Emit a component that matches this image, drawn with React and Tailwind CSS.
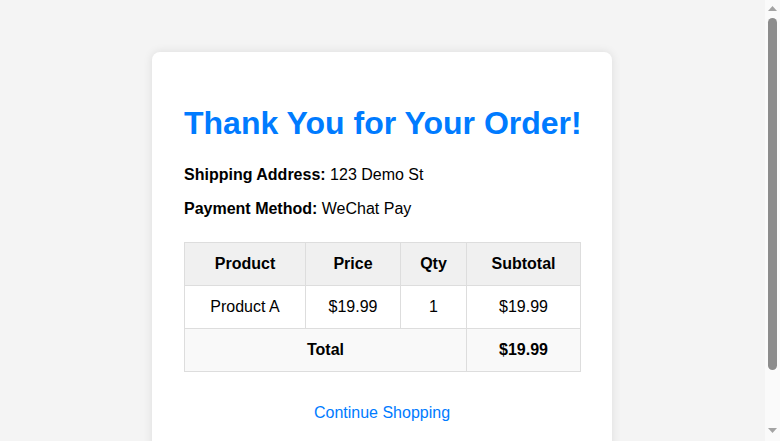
const ITEMS = [{ name: "Product A", price: "$19.99", qty: 1, subtotal: "$19.99" }];

function Scrollbar() {
  return (
    <div className="flex h-screen w-[15px] shrink-0 flex-col items-center bg-[#fafafa] pt-[6px] pb-[8px]">
      <svg width="9" height="5" viewBox="0 0 9 5">
        <path d="M4.5 0L9 5H0z" fill="#a3a3a3" />
      </svg>
      <div className="mt-[7px] h-[352px] w-[9px] rounded-full bg-[#8c8c8c]" />
      <div className="flex-1" />
      <svg width="9" height="5" viewBox="0 0 9 5">
        <path d="M0 0H9L4.5 5z" fill="#a3a3a3" />
      </svg>
    </div>
  );
}

export default function App() {
  return (
    <div className="flex h-screen bg-[#f4f4f4] font-['Liberation_Sans',Arial,sans-serif] text-[16px] leading-[normal] text-black">
      <div className="flex-1 overflow-hidden">
        <div className="pt-[52px] pr-px pb-[52px]">
          <div className="mx-auto w-[460px] rounded-lg bg-white px-8 pt-8 pb-8 shadow-[0_0_10px_rgba(0,0,0,0.1)]">
            <h1 className="mt-[21px] mb-6 whitespace-nowrap text-[32px] font-bold text-[#007bff]">
              Thank You for Your Order!
            </h1>
            <p className="mb-4">
              <strong className="font-bold">Shipping Address:</strong> 123 Demo St
            </p>
            <p>
              <strong className="font-bold">Payment Method:</strong> WeChat Pay
            </p>

            <table className="mt-6 w-full table-fixed border-collapse text-center">
              <colgroup>
                <col className="w-[121px]" />
                <col className="w-[95px]" />
                <col className="w-[66px]" />
                <col className="w-[114px]" />
              </colgroup>
              <thead>
                <tr className="bg-[#f0f0f0]">
                  <th className="border border-[#ddd] p-3 font-bold">Product</th>
                  <th className="border border-[#ddd] p-3 font-bold">Price</th>
                  <th className="border border-[#ddd] p-3 font-bold">Qty</th>
                  <th className="border border-[#ddd] p-3 font-bold">Subtotal</th>
                </tr>
              </thead>
              <tbody>
                {ITEMS.map((item) => (
                  <tr key={item.name}>
                    <td className="border border-[#ddd] p-3">{item.name}</td>
                    <td className="border border-[#ddd] p-3">{item.price}</td>
                    <td className="border border-[#ddd] p-3">{item.qty}</td>
                    <td className="border border-[#ddd] p-3">{item.subtotal}</td>
                  </tr>
                ))}
                <tr className="bg-[#f9f9f9] font-bold">
                  <td colSpan={3} className="border border-[#ddd] p-3">
                    Total
                  </td>
                  <td className="border border-[#ddd] p-3">$19.99</td>
                </tr>
              </tbody>
            </table>

            <div className="mt-[22px] text-center">
              <a href="#" className="inline-block px-5 py-2.5 text-[#007bff]">
                Continue Shopping
              </a>
            </div>
          </div>
        </div>
      </div>
      <Scrollbar />
    </div>
  );
}
